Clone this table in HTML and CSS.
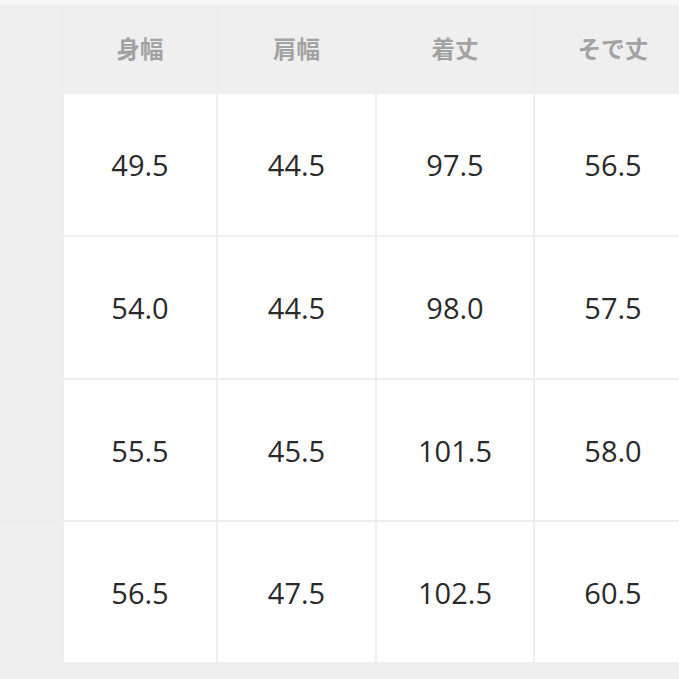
FILE: index.html
```html
<!DOCTYPE html>
<html lang="ja">
<head>
<meta charset="utf-8">
<link rel="stylesheet" href="styles.css">
</head>
<body>
<div class="strip"></div>
<div class="table">
  <div class="hcell blank"></div>
  <div class="hcell">身幅</div>
  <div class="hcell">肩幅</div>
  <div class="hcell">着丈</div>
  <div class="hcell">そで丈</div>

  <div class="side"></div>
  <div class="cell">49.5</div>
  <div class="cell">44.5</div>
  <div class="cell">97.5</div>
  <div class="cell">56.5</div>

  <div class="side"></div>
  <div class="cell">54.0</div>
  <div class="cell">44.5</div>
  <div class="cell">98.0</div>
  <div class="cell">57.5</div>

  <div class="side"></div>
  <div class="cell">55.5</div>
  <div class="cell">45.5</div>
  <div class="cell">101.5</div>
  <div class="cell">58.0</div>

  <div class="side"></div>
  <div class="cell">56.5</div>
  <div class="cell">47.5</div>
  <div class="cell">102.5</div>
  <div class="cell">60.5</div>
</div>
</body>
</html>
```
FILE: styles.css
```css
html, body {
  margin: 0;
  padding: 0;
  background: #efefef;
  width: 679px;
  height: 679px;
  overflow: hidden;
}
.strip {
  height: 5px;
  background: #f6f6f6;
}
.table {
  display: grid;
  grid-template-columns: 62px 152px 157px 156px 156px;
  grid-template-rows: 87px 141px 141px 140px 140px;
  gap: 2px;
  background: #eeeeee;
  width: 692px;
}
.hcell {
  background: #efefef;
  display: flex;
  align-items: center;
  justify-content: center;
  font-family: "Noto Sans CJK JP", "Noto Sans", sans-serif;
  font-weight: 700;
  font-size: 23.5px;
  color: #a2a2a2;
  padding-bottom: 2px;
}
.side {
  background: #efefef;
}
.cell {
  background: #ffffff;
  display: flex;
  align-items: center;
  justify-content: center;
  font-family: "Open Sans", "Noto Sans", sans-serif;
  font-size: 29px;
  color: #2a2a2a;
}
```
